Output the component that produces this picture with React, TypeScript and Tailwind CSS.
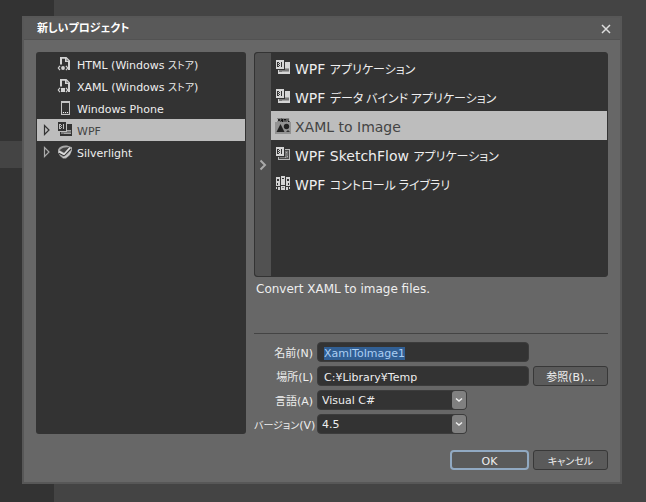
import { useEffect, useRef, type ReactNode } from "react";

const dialogFont =
  "font-['DejaVu_Sans','Noto_Sans_CJK_JP',sans-serif] [font-feature-settings:'palt']";

/* Kana are set a little smaller than the Latin text around them. */
function Kana({ children }: { children: ReactNode }) {
  return (
    <span className="font-['Noto_Sans_CJK_JP',sans-serif] text-[10px] leading-none">{children}</span>
  );
}

function KanaLarge({ children }: { children: ReactNode }) {
  return (
    <span className="font-['Noto_Sans_CJK_JP',sans-serif] text-[12px] leading-none">{children}</span>
  );
}

function StoreIcon({ kind }: { kind: "html" | "xaml" }) {
  return (
    <svg className="h-4 w-4" viewBox="0 0 16 16" fill="none" aria-hidden="true">
      <path d="M3 8.500V1h6.500L13 4.500V14h-2V6H8V2.800H5v5.700z" fill="#d2d2d2" />
      <path d="M9.500 2.500L11.700 5H9.500z" fill="#777" />
      <path d="M3 9.800L1.300 12 3 14.200M9 9.800l1.700 2.200L9 14.200" stroke="#d2d2d2" strokeWidth="1.200" />
      {kind === "html" ? (
        <circle cx="6" cy="12" r="1.900" fill="#d2d2d2" />
      ) : (
        <rect x="4" y="10" width="4" height="4" fill="#d2d2d2" />
      )}
    </svg>
  );
}

function PhoneIcon() {
  return (
    <svg className="h-4 w-4" viewBox="0 0 16 16" shapeRendering="crispEdges" aria-hidden="true">
      <path d="M4 1h9v14H4zM5 3v11h7V3z" fill="#c4c4c4" fillRule="evenodd" />
      <path d="M5 12h7v2H5z" fill="#444" />
      <path d="M6 12h1v1H6zM8 12h1v1H8zM10 12h1v1h-1z" fill="#eee" />
    </svg>
  );
}

function WpfIcon({ dark = false, sketch = false }: { dark?: boolean; sketch?: boolean }) {
  const ink = dark ? "#333" : "#d6d6d6";
  const paper = dark ? "#bdbdbd" : "#333";
  return (
    <svg className="h-4 w-4" viewBox="0 0 16 16" shapeRendering="crispEdges" aria-hidden="true">
      {sketch ? (
        <>
          <path d="M3 2h12v11H3z" fill="#b8b8b8" />
          <path d="M4 3h10v9H4z" fill="#4c4c4c" />
          <path d="M10 4h3v7H5v-1h5z" fill="#777" />
          <path d="M11 5h1v1h-1zM10 10h1v1h-1zM12 9h1v1h-1z" fill="#aaa" />
        </>
      ) : (
        <>
          <path d="M3 2h12v12H3z" fill={ink} />
          <path d="M4 8h10v4H4z" fill="#777" />
          <path d="M10 8h4v1h-4zM7 11h7v1H7z" fill="#a3a3a3" />
        </>
      )}
      <path d="M0 0h10v10H0z" fill={paper} />
      <path d="M1 0h8v9H1z" fill={ink} />
      <path d="M2 2h2v1H3v1h1v1H3v1h1v1H2zM4 3h1v1H4zM4 5h1v1H4zM6 2h1v5H6z" fill={paper} />
    </svg>
  );
}

function SilverlightIcon() {
  return (
    <svg className="h-4 w-4" viewBox="0 0 16 16" fill="none" aria-hidden="true">
      <path d="M1 5.500C2.500 2.500 6 1 10 1.500l5 1.800v3.200l-2 4.500-4 3.500H6L3 12 1 8.500z" fill="#a8a8a8" />
      <path d="M2.500 6.300C6 3 9 3 12.500 3.300L7.500 9z" fill="#444" />
      <path d="M2 9.300l5 2.500L14 5" stroke="#383838" strokeWidth="1.200" />
      <path d="M2 7.500l5 2.800 6-6.500" stroke="#ddd" strokeWidth="1.500" />
      <path d="M6 13.500c4-.5 6-3 7.500-6" stroke="#d0d0d0" strokeWidth="1.200" />
    </svg>
  );
}

function XamlImageIcon() {
  return (
    <svg className="h-4 w-4" viewBox="0 0 16 16" aria-hidden="true">
      <path d="M0 4h16v12H0z" fill="#929292" shapeRendering="crispEdges" />
      <path d="M2.500 0h12v4h-12z" fill="#aaa" />
      <path d="M3 .5l2 3m0-3l-2 3M6 4V1h1.500v3M6 2.500h1.500M9 4V.8l1 1.500 1-1.500V4M13 .5v3h1.500" fill="none" stroke="#111" />
      <path d="M5.500 6l4 8h-8z" fill="#222" />
      <circle cx="11.500" cy="8.500" r="2.700" fill="#222" />
      <path d="M11 14l2-2 2 2z" fill="#333" />
    </svg>
  );
}

function ControlLibraryIcon() {
  return (
    <svg className="h-4 w-4" viewBox="0 0 16 16" shapeRendering="crispEdges" aria-hidden="true">
      <path d="M1 1h4v9H1zM6 0h4v9H6zM11 1h4v9h-4zM1 11h1v2H1zM3 11h2v3H3zM6 10h4v4H6zM11 11h2v3h-2zM14 11h1v2h-1z" fill="#d2d2d2" />
      <path d="M2 3h2v2H2zM7 2h2v1H7zM12 3h2v2h-2zM2 7h1v2H2zM13 7h1v2h-1z" fill="#333" />
      <path d="M7 11h2v1H7z" fill="#888" />
    </svg>
  );
}

function Expander() {
  return (
    <svg className="h-3 w-2" viewBox="0 0 8 12" fill="none" aria-hidden="true">
      <path d="M1.500 1.500v9L6 6z" stroke="currentColor" strokeWidth="1.200" />
    </svg>
  );
}

type Item = { icon: ReactNode; label: ReactNode; selected?: boolean; expandable?: boolean };

const categories: Item[] = [
  { icon: <StoreIcon kind="html" />, label: <>HTML (Windows <Kana>ストア</Kana>)</> },
  { icon: <StoreIcon kind="xaml" />, label: <>XAML (Windows <Kana>ストア</Kana>)</> },
  { icon: <PhoneIcon />, label: "Windows Phone" },
  { icon: <WpfIcon dark />, label: "WPF", selected: true, expandable: true },
  { icon: <SilverlightIcon />, label: "Silverlight", expandable: true },
];

const templates: Item[] = [
  { icon: <WpfIcon />, label: <>WPF <KanaLarge>アプリケーション</KanaLarge></> },
  { icon: <WpfIcon />, label: <>WPF <KanaLarge>データ バインド アプリケーション</KanaLarge></> },
  { icon: <XamlImageIcon />, label: "XAML to Image", selected: true },
  { icon: <WpfIcon sketch />, label: <>WPF SketchFlow <KanaLarge>アプリケーション</KanaLarge></> },
  { icon: <ControlLibraryIcon />, label: <>WPF <KanaLarge>コントロール ライブラリ</KanaLarge></> },
];

const fieldClass =
  "h-5 w-full rounded border border-[#3c3c3c] bg-[#333] pt-0.5 text-[11px] text-[#eee] outline-none";
const labelClass = "pt-1 text-right text-[11px] leading-4 whitespace-nowrap";
const buttonClass =
  "h-5 rounded-[3px] border border-[#383838] bg-[#5a5a5a] pt-0.5 text-[11px] leading-none text-[#eee] outline-none";

function SelectField({ id, value }: { id: string; value: string }) {
  return (
    <div className="relative flex w-[150px]">
      <select id={id} defaultValue={value} className={`${fieldClass} appearance-none pl-1`}>
        <option>{value}</option>
      </select>
      <span className="pointer-events-none absolute inset-y-px right-px flex w-3.5 items-center justify-center rounded-[3px] bg-[#808080]">
        <svg className="h-2 w-2" viewBox="0 0 8 8" fill="none" aria-hidden="true">
          <path d="M1 2.500l3 2.500 3-2.500" stroke="#eee" strokeWidth="1.500" />
        </svg>
      </span>
    </div>
  );
}

export default function App() {
  const nameRef = useRef<HTMLInputElement>(null);
  useEffect(() => {
    nameRef.current?.focus();
    nameRef.current?.select();
  }, []);

  return (
    <div className={`relative flex min-h-screen bg-[#444] text-[#eee] ${dialogFont}`}>
      <div className="flex w-[54px] shrink-0 flex-col">
        <div className="h-[141px] bg-[#333]" />
        <div className="h-[27px] bg-[#444]" />
        <div className="grow bg-[#333]" />
      </div>

      <div className="absolute inset-x-0 top-0 pt-4 pr-6 pl-[22px]">
        <main role="dialog" aria-labelledby="dialog-title" className="border-2 border-[#575757] bg-[#676767]">
          <header className="flex h-[22px] items-center justify-between border-b border-[#525252] bg-[#595959] pr-1.5 pl-[13px]">
            <h1 id="dialog-title" className="pt-0.5 text-[11px] font-bold text-white">新しいプロジェクト</h1>
            <button type="button" aria-label="閉じる" className="flex h-4 w-4 items-center justify-center">
              <svg className="h-2.5 w-2.5" viewBox="0 0 10 10" fill="none" aria-hidden="true">
                <path d="M1 1l8 8M9 1L1 9" stroke="#ddd" strokeWidth="1.500" />
              </svg>
            </button>
          </header>

          <div className="flex gap-2 px-3 pt-3">
            <ul className="w-[210px] shrink-0 rounded-[3px] bg-[#333] px-px py-px">
              {categories.map((item, i) => (
                <li
                  key={i}
                  className={`flex h-[22px] items-center pl-1.5 text-[11px] ${item.selected ? "bg-[#bdbdbd] text-[#444]" : ""}`}
                >
                  <span className={`w-3.5 ${item.selected ? "text-[#333]" : "text-[#aaa]"}`}>
                    {item.expandable && <Expander />}
                  </span>
                  {item.icon}
                  <span className="pt-1 pl-1 leading-4 whitespace-nowrap">{item.label}</span>
                </li>
              ))}
            </ul>

            <div className="min-w-0 grow">
              <div className="flex h-[225px] rounded-[3px] border border-[#333] bg-[#333]">
                <button type="button" aria-label="一覧を開く" className="flex w-4 shrink-0 items-center justify-center rounded-l-[3px] bg-[#515151]">
                  <svg className="h-3 w-2" viewBox="0 0 8 12" fill="none" aria-hidden="true">
                    <path d="M1.500 1.500L6 6l-4.500 4.500" stroke="#aaa" strokeWidth="2" />
                  </svg>
                </button>
                <ul className="grow">
                  {templates.map((item, i) => (
                    <li
                      key={i}
                      className={`flex h-[29px] items-center gap-1 pl-1 text-[14px] ${item.selected ? "bg-[#bdbdbd] text-[#444]" : ""}`}
                    >
                      {item.icon}
                      <span className="pt-0.5 leading-5 whitespace-nowrap">{item.label}</span>
                    </li>
                  ))}
                </ul>
              </div>

              <p className="h-[57px] border-b border-[#444] pt-1 pl-0.5 text-[12px] leading-4">Convert XAML to image files.</p>

              <form className="grid grid-cols-[59px_1fr_75px] items-center gap-x-1 gap-y-1 pt-2" onSubmit={(e) => e.preventDefault()}>
                <label htmlFor="name" className={labelClass}>名前(N)</label>
                <input id="name" ref={nameRef} defaultValue="XamlToImage1" className={`${fieldClass} px-1.5 selection:bg-[#315f94] selection:text-[#a9cdf2]`} />
                <span />
                <label htmlFor="location" className={labelClass}>場所(L)</label>
                <input id="location" defaultValue="C:¥Library¥Temp" className={`${fieldClass} px-1.5`} />
                <button type="button" className={buttonClass}>参照(B)...</button>
                <label htmlFor="language" className={labelClass}>言語(A)</label>
                <div className="col-span-2"><SelectField id="language" value="Visual C#" /></div>
                <label htmlFor="version" className={labelClass}><Kana>バージョン</Kana>(V)</label>
                <div className="col-span-2"><SelectField id="version" value="4.5" /></div>
              </form>
            </div>
          </div>

          <footer className="flex justify-end gap-1 px-3 pt-4 pb-3">
            <button type="button" className="h-5 w-[79px] rounded border-2 border-[#91a9c2] bg-[#5a5a5a] pt-0.5 text-[11px] leading-none">OK</button>
            <button type="button" className={`${buttonClass} w-[75px]`}><Kana>キャンセル</Kana></button>
          </footer>
        </main>
      </div>
    </div>
  );
}
